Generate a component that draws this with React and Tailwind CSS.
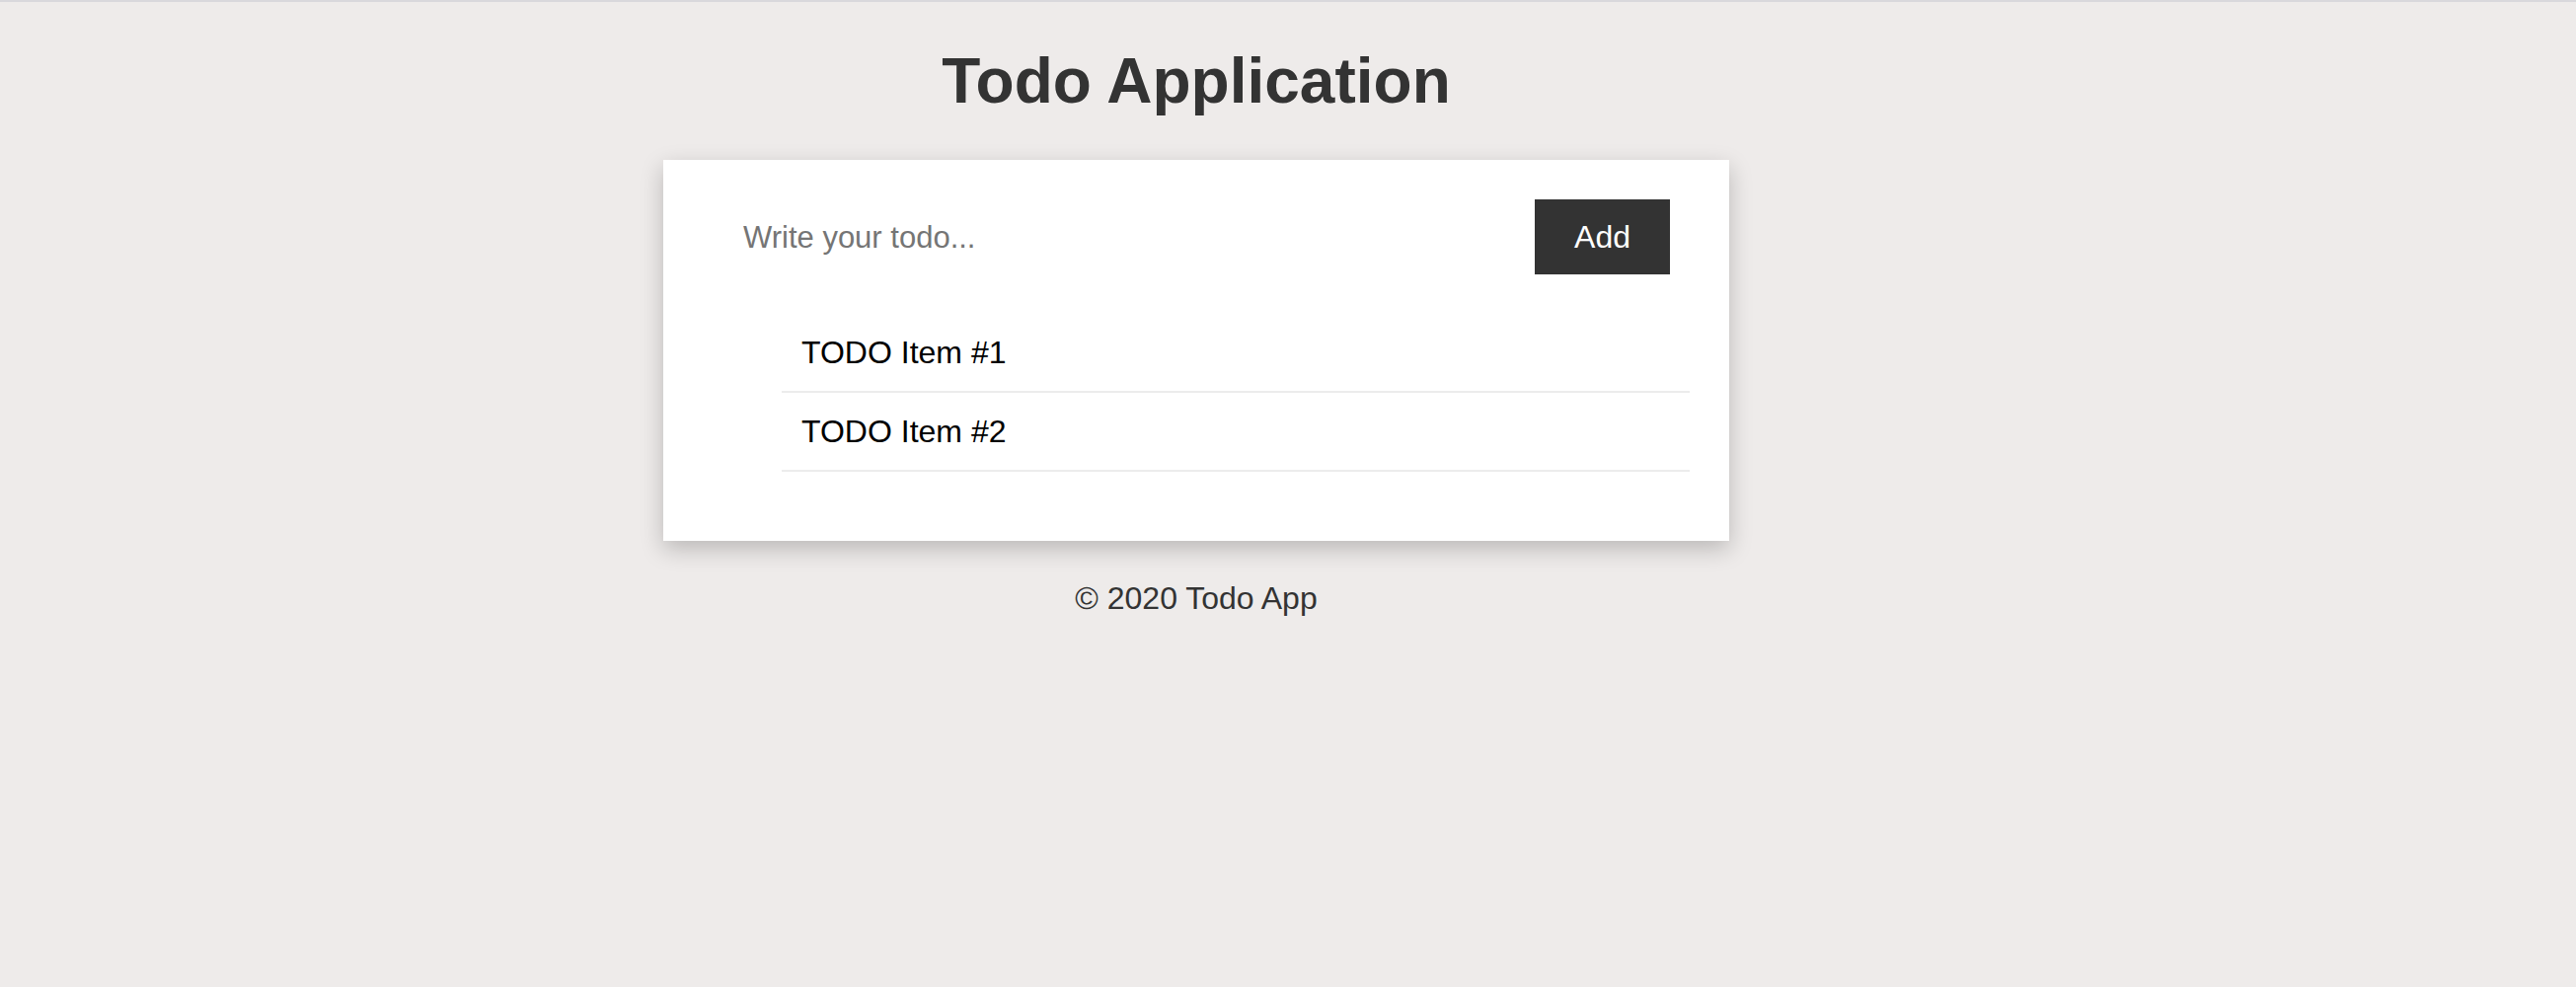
import { useState } from "react";

export default function App() {
  const [todos, setTodos] = useState(["TODO Item #1", "TODO Item #2"]);
  const [text, setText] = useState("");

  const addTodo = () => {
    if (!text.trim()) return;
    setTodos([...todos, text.trim()]);
    setText("");
  };

  return (
    <div className="min-h-screen bg-[#eeebea] font-['Liberation_Sans',Arial,sans-serif]">
      <div className="h-[2px] bg-[#d9d8dc]"></div>
      <div className="w-[2424px] flex flex-col items-center">
        <h1 className="mt-[48px] text-[64px] leading-[64px] font-bold text-[#333333]">
          Todo Application
        </h1>

        {/* Card */}
        <div className="mt-[48px] w-[1080px] h-[386px] bg-white shadow-[0_8px_22px_rgba(0,0,0,0.22)] pt-[40px] pl-[40px] pr-[60px]">
          <div className="flex h-[76px]">
            <input
              type="text"
              value={text}
              onChange={(e) => setText(e.target.value)}
              placeholder="Write your todo..."
              className="flex-1 pl-[41px] pt-[3px] text-[31px] text-black placeholder:text-[#757575] outline-none bg-transparent"
            />
            <button
              onClick={addTodo}
              className="w-[137px] h-[76px] bg-[#333333] text-white text-[32px] leading-[37px]"
            >
              Add
            </button>
          </div>

          <ul className="mt-[40px] pl-[80px] mr-[-20px]">
            {todos.map((todo, i) => (
              <li
                key={i}
                className="pl-[20px] pt-[20px] pb-[20px] text-[32px] leading-[38px] text-black border-b-2 border-[#ececec]"
              >
                {todo}
              </li>
            ))}
          </ul>
        </div>

        <p className="mt-[40px] text-[32px] leading-[37px] text-[#333333]">
          © 2020 Todo App
        </p>
      </div>
    </div>
  );
}
